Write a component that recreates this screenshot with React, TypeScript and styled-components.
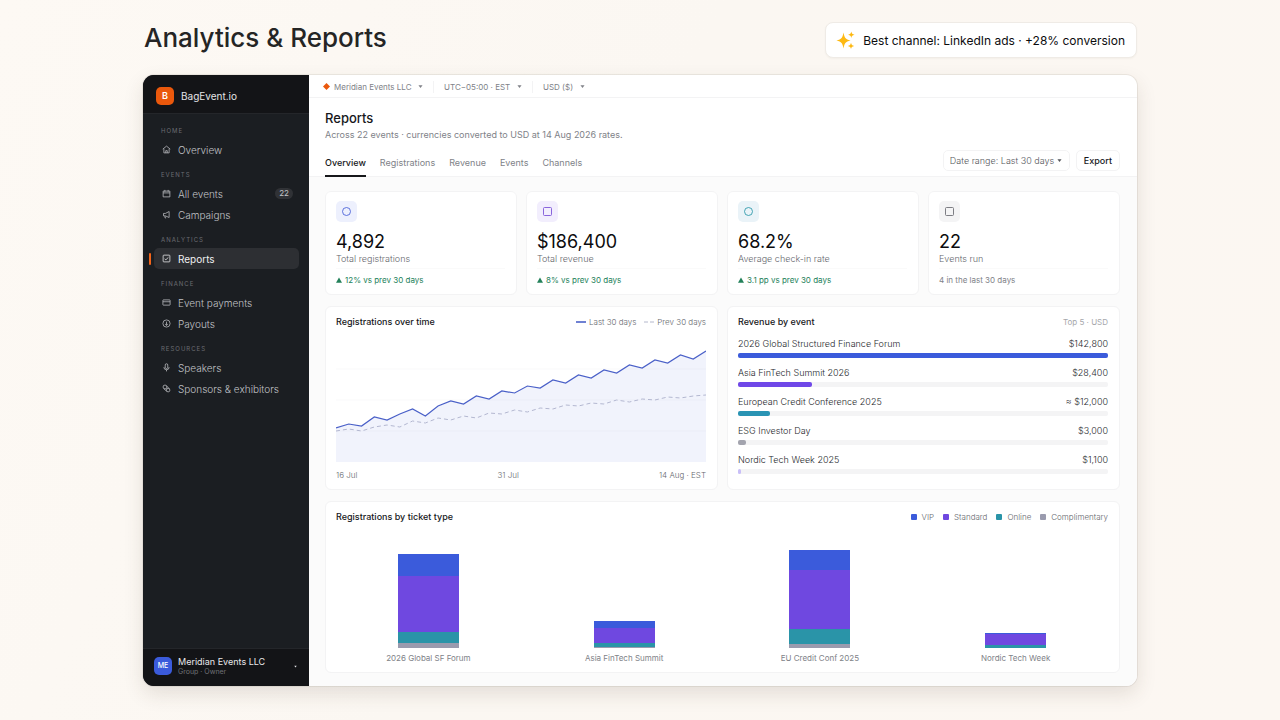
import React from "react";
import styled, { createGlobalStyle } from "styled-components";

const color = {
  ink: "#17181b",
  soft: "#3c3e44",
  muted: "#808288",
  faint: "#a6a7ab",
  line: "#f3f3f4",
  blue: "#3b5bdb",
  violet: "#6f48e0",
  teal: "#2a94a8",
  grey: "#9a9bae",
  green: "#23815a",
  orange: "#ea580c",
};

const GlobalStyle = createGlobalStyle`
  *, *::before, *::after { box-sizing: border-box; }
  body {
    margin: 0;
    background: linear-gradient(115deg, #fdf9f4 0%, #fbf7f2 45%, #fcf7f2 100%);
    font-family: Inter, "Liberation Sans", sans-serif;
    font-size: 8px;
    line-height: 12px;
    color: ${color.ink};
  }
  h1, h2, h3, p, ul { margin: 0; padding: 0; }
  ul { list-style: none; }
  button, select { font: inherit; color: inherit; margin: 0; }
  a { color: inherit; text-decoration: none; }
`;

const Page = styled.div`
  min-height: 100vh;
  padding: 22px 143px 34px;
  display: flex;
  flex-direction: column;
  gap: 17px;
`;

const Masthead = styled.header`
  display: flex;
  justify-content: space-between;
  align-items: center;
  height: 36px;
`;

const PageTitle = styled.h1`
  font-size: 26px;
  line-height: 32px;
  font-weight: 500;
  color: #252525;
  padding: 0 0 4px 1px;
`;

const Callout = styled.p`
  display: flex;
  align-items: center;
  gap: 8px;
  height: 36px;
  padding: 1px 11px 0 10px;
  font-size: 12px;
  line-height: 18px;
  color: #0c0c0e;
  background: #fff;
  border: 1px solid #efebe6;
  border-radius: 8px;
  box-shadow: 0 1px 2px rgba(60, 40, 20, 0.04);
  white-space: nowrap;
`;

const AppWindow = styled.div`
  flex: 1;
  display: flex;
  background: #fff;
  border-radius: 11px;
  overflow: hidden;
  box-shadow: 0 0 0 1px rgba(60, 50, 40, 0.08), 0 8px 20px rgba(70, 55, 40, 0.13);
`;

const Sidebar = styled.aside`
  flex: none;
  width: 166px;
  display: flex;
  flex-direction: column;
  background: #1b1e22;
  color: #b9bbbf;
`;

const Brand = styled.div`
  display: flex;
  align-items: center;
  gap: 7px;
  height: 39px;
  padding: 3px 13px 0;
  background: #131417;
  border-bottom: 1px solid #24262a;
  font-size: 10px;
  color: #e4e4e6;
`;

const BrandMark = styled.span`
  display: grid;
  place-items: center;
  width: 18px;
  height: 18px;
  border-radius: 5px;
  background: ${color.orange};
  color: #fff;
  font-size: 9px;
  font-weight: 600;
`;

const SideNav = styled.nav`
  flex: 1;
  padding: 2px 10px 0 6px;
`;

const SectionLabel = styled.h2`
  padding: 10px 0 4px 12px;
  font-size: 6px;
  line-height: 9px;
  font-weight: 400;
  letter-spacing: 1px;
  color: #6b6d72;
`;

const NavRow = styled.li`
  display: flex;
  align-items: center;
  gap: 3px;
`;

const Marker = styled.span<{ $on?: boolean }>`
  width: 2px;
  height: 12px;
  border-radius: 1px;
  background: ${(p) => (p.$on ? "#f4651a" : "transparent")};
`;

const NavLink = styled.a<{ $active?: boolean }>`
  flex: 1;
  display: flex;
  align-items: center;
  gap: 7px;
  height: 21px;
  padding: 0 6px 0 8px;
  border-radius: 5px;
  font-size: 10px;
  font-weight: ${(p) => (p.$active ? 400 : 300)};
  background: ${(p) => (p.$active ? "#2d2f33" : "transparent")};
  color: ${(p) => (p.$active ? "#f0f0f1" : "#c0c2c6")};
  svg { flex: none; width: 9px; height: 9px; }
`;

const Count = styled.span`
  margin-left: auto;
  padding: 0 4px;
  border-radius: 6px;
  background: #303236;
  font-size: 8px;
  line-height: 11px;
  font-weight: 400;
  color: #c4c5c8;
`;

const Account = styled.button`
  display: flex;
  align-items: center;
  gap: 6px;
  height: 38px;
  padding: 0 12px 3px 11px;
  border: 0;
  border-top: 1px solid #24262a;
  background: #131417;
  text-align: left;
  color: #e8e8ea;
`;

const Avatar = styled.span`
  display: grid;
  place-items: center;
  width: 18px;
  height: 18px;
  border-radius: 5px;
  background: ${color.blue};
  font-size: 7px;
  font-weight: 500;
  color: #fff;
`;

const AccountText = styled.span`
  flex: 1;
  display: flex;
  flex-direction: column;
  font-size: 9px;
  line-height: 11px;
`;

const AccountRole = styled.small`
  font-size: 7px;
  line-height: 9px;
  color: #6f7176;
`;

const Main = styled.main`
  flex: 1;
  min-width: 0;
  display: flex;
  flex-direction: column;
`;

const TopBar = styled.div`
  display: flex;
  align-items: center;
  height: 23px;
  padding: 1px 14px 0;
  border-bottom: 1px solid ${color.line};
`;

const Picker = styled.div`
  display: flex;
  align-items: center;
  gap: 4px;
  color: ${color.muted};
  & + & {
    margin-left: 10px;
    padding-left: 10px;
    border-left: 1px solid ${color.line};
  }
`;

const PlainSelect = styled.select`
  appearance: none;
  border: 0;
  padding: 0 2px 0 0;
  background: transparent;
  line-height: 12px;
`;

const PageHead = styled.header`
  padding: 12px 17px 0 16px;
  border-bottom: 1px solid ${color.line};
`;

const Heading = styled.h2`
  font-size: 13px;
  line-height: 17px;
  font-weight: 500;
`;

const Subheading = styled.p`
  font-size: 9px;
  line-height: 14px;
  color: ${color.muted};
  padding-top: 1px;
`;

const HeadRow = styled.div`
  display: flex;
  justify-content: space-between;
  margin-top: 8px;
`;

const Tabs = styled.div`
  display: flex;
  gap: 14px;
`;

const Tab = styled.button<{ $active?: boolean }>`
  height: 27px;
  margin-bottom: -1px;
  padding: 0;
  border: 0;
  border-bottom: 2px solid ${(p) => (p.$active ? color.ink : "transparent")};
  background: transparent;
  font-size: 9px;
  font-weight: ${(p) => (p.$active ? 500 : 400)};
  color: ${(p) => (p.$active ? color.ink : color.muted)};
`;

const Actions = styled.div`
  display: flex;
  gap: 6px;
`;

const RangePicker = styled.div`
  display: flex;
  align-items: center;
  height: 21px;
  padding: 0 7px 0 6px;
  border: 1px solid ${color.line};
  border-radius: 5px;
  font-size: 9px;
  font-weight: 300;
  color: #55575c;
`;

const ExportButton = styled.button`
  height: 21px;
  padding: 0 7px;
  border: 1px solid ${color.line};
  border-radius: 5px;
  background: #fff;
  font-size: 9px;
  font-weight: 500;
`;

const Board = styled.div`
  flex: 1;
  display: grid;
  grid-template-rows: 104px 184px 1fr;
  gap: 11px;
  padding: 14px 17px 13px 16px;
  background: #fbfbfb;
`;

const Row = styled.div<{ $columns: number }>`
  display: grid;
  grid-template-columns: repeat(${(p) => p.$columns}, minmax(0, 1fr));
  gap: 9px;
`;

const Card = styled.section`
  display: flex;
  flex-direction: column;
  padding: 9px 11px 8px 10px;
  background: #fff;
  border: 1px solid ${color.line};
  border-radius: 6px;
`;

const StatIcon = styled.span<{ $tint: string; $ink: string }>`
  display: grid;
  place-items: center;
  width: 21px;
  height: 21px;
  border-radius: 5px;
  background: ${(p) => p.$tint};
  color: ${(p) => p.$ink};
`;

const StatValue = styled.p`
  padding-top: 9px;
  font-size: 18px;
  line-height: 22px;
  font-weight: 400;
  color: #0c0c0e;
`;

const StatLabel = styled.h3`
  font-size: 9px;
  line-height: 12px;
  font-weight: 300;
  color: #65676d;
  padding-bottom: 3px;
`;

const StatNote = styled.p<{ $up?: boolean }>`
  display: flex;
  align-items: center;
  gap: 3px;
  padding-top: 5px;
  border-top: 1px solid #fafafa;
  color: ${(p) => (p.$up ? color.green : color.muted)};
`;

const CardHead = styled.header`
  display: flex;
  justify-content: space-between;
  align-items: center;
  height: 12px;
`;

const CardTitle = styled.h3`
  font-size: 9px;
  line-height: 12px;
  font-weight: 500;
`;

const CardMeta = styled.span`
  font-size: 8px;
  color: ${color.faint};
`;

const Legend = styled.ul<{ $roomy?: boolean }>`
  display: flex;
  gap: ${(p) => (p.$roomy ? 9 : 8)}px;
  font-weight: 300;
  color: #65676d;
  li { gap: ${(p) => (p.$roomy ? 5 : 3)}px; }
`;

const LegendItem = styled.li`
  display: flex;
  align-items: center;
`;

const Swatch = styled.span<{ $fill: string }>`
  width: 6px;
  height: 6px;
  border-radius: 1px;
  background: ${(p) => p.$fill};
`;

const Plot = styled.svg`
  display: block;
  width: 100%;
  height: 115px;
  margin-top: 19px;
`;

const Axis = styled.div`
  display: flex;
  justify-content: space-between;
  padding-top: 7px;
  font-weight: 300;
  color: #65676d;
`;

const RevenueList = styled.ul`
  display: flex;
  flex-direction: column;
  gap: 9px;
  padding-top: 10px;
`;

const RevenueLine = styled.div`
  display: flex;
  justify-content: space-between;
  padding-bottom: 3px;
  font-size: 9px;
  font-weight: 300;
  color: #26282c;
`;

const Track = styled.div`
  height: 5px;
  border-radius: 2px;
  background: #f4f4f5;
`;

const Fill = styled.div<{ $fill: string }>`
  height: 5px;
  border-radius: 2px;
  background: ${(p) => p.$fill};
`;

const Columns = styled.ul`
  flex: 1;
  display: grid;
  grid-template-columns: repeat(4, minmax(0, 1fr));
  gap: 11px;
`;

const Column = styled.li`
  display: flex;
  flex-direction: column;
  justify-content: flex-end;
  align-items: center;
  color: ${color.muted};
`;

const Stack = styled.div`
  width: 33%;
  margin-bottom: 4px;
`;

const Segment = styled.div<{ $fill: string }>`
  background: ${(p) => p.$fill};
`;

const icons: Record<string, React.ReactNode> = {
  home: <path d="M1 5.500 6 1.500l5 4M2.500 5v5.500h7V5M5 10.500V7.500h2v3" />,
  calendar: <path d="M1.500 2.800h9v7.700h-9zM1.500 5.200h9M3.800 1.200v2.400M8.200 1.200v2.400" />,
  horn: <path d="M9.500 2v8L4.500 7.800H2V4.600h2.500zM4 8v2.500h1.500" />,
  report: <path d="M2.500 1.500h7a1 1 0 0 1 1 1v7a1 1 0 0 1-1 1h-7a1 1 0 0 1-1-1v-7a1 1 0 0 1 1-1zM3.500 6.500l1.700 1.200L8.500 4.500" />,
  card: <path d="M1.800 2.500h8.400a.6.6 0 0 1 .6.6v5.800a.6.6 0 0 1-.6.6H1.800a.6.6 0 0 1-.6-.6V3.100a.6.6 0 0 1 .6-.6zM1.200 5h9.600" />,
  payout: <path d="M6 1.200a4.800 4.800 0 1 0 0 9.600 4.800 4.800 0 0 0 0-9.600zM6 3.500v5M4.200 6.800 6 8.500l1.800-1.700" />,
  mic: <path d="M6 1a1.700 1.700 0 0 1 1.700 1.700v3a1.700 1.700 0 0 1-3.400 0v-3A1.700 1.700 0 0 1 6 1zM2.500 5.500a3.500 3.500 0 0 0 7 0M6 9v2.200" />,
  link: (
    <>
      <circle cx="4" cy="4" r="2.600" />
      <circle cx="8.200" cy="8.200" r="2.300" />
      <path d="M6.300 2.800 9.800 6.300M2.500 6.200l3.700 3.600" />
    </>
  ),
};

const Icon = ({ name }: { name: string }) => (
  <svg viewBox="0 0 12 12" fill="none" stroke="currentColor" strokeWidth="1" strokeLinejoin="round" aria-hidden>
    {icons[name]}
  </svg>
);

const Caret = ({ size = 5 }: { size?: number }) => (
  <svg width={size} height={size} viewBox="0 0 6 6" fill="currentColor" aria-hidden>
    <path d="M0.500 1.500h5L3 4.800z" />
  </svg>
);

const Sparkles = () => (
  <svg width="19" height="19" viewBox="0 0 19 19" fill="#fdb913" aria-hidden>
    <path d="M7.500 1.500C8.500 7 9.300 8 14.500 9.500 9.300 11 8.500 12 7.500 17.500 6.500 12 5.700 11 .5 9.500 5.700 8 6.500 7 7.500 1.500z" />
    <path d="M15.300.5c.5 2.200 1 2.700 3.200 3.200-2.200.5-2.700 1-3.200 3.200-.5-2.200-1-2.700-3.200-3.200 2.200-.5 2.700-1 3.200-3.200z" />
    <path d="M15 11.700c.5 2.200 1 2.700 3.200 3.200-2.200.5-2.700 1-3.200 3.200-.5-2.200-1-2.700-3.200-3.200 2.200-.5 2.700-1 3.200-3.200z" />
  </svg>
);

type NavSection = {
  label: string;
  items: { icon: string; text: string; count?: number; active?: boolean }[];
};

const navigation: NavSection[] = [
  { label: "HOME", items: [{ icon: "home", text: "Overview" }] },
  { label: "EVENTS", items: [{ icon: "calendar", text: "All events", count: 22 }, { icon: "horn", text: "Campaigns" }] },
  { label: "ANALYTICS", items: [{ icon: "report", text: "Reports", active: true }] },
  { label: "FINANCE", items: [{ icon: "card", text: "Event payments" }, { icon: "payout", text: "Payouts" }] },
  { label: "RESOURCES", items: [{ icon: "mic", text: "Speakers" }, { icon: "link", text: "Sponsors & exhibitors" }] },
];

const stats = [
  { value: "4,892", label: "Total registrations", note: "12% vs prev 30 days", up: true, round: true, tint: "#edf0fd", ink: "#4c63d8" },
  { value: "$186,400", label: "Total revenue", note: "8% vs prev 30 days", up: true, round: false, tint: "#f2eefd", ink: "#7d55d8" },
  { value: "68.2%", label: "Average check-in rate", note: "3.1 pp vs prev 30 days", up: true, round: true, tint: "#eaf3f8", ink: "#2f9bab" },
  { value: "22", label: "Events run", note: "4 in the last 30 days", up: false, round: false, tint: "#f4f4f5", ink: "#6f7177" },
];

const current = [81, 77, 79, 70, 73, 67, 62, 69, 59, 54, 57, 49, 52, 44, 46, 39, 41, 33, 36, 28, 31, 23, 26, 18, 21, 13, 16, 8, 12, 4];
const previous = [84, 82, 84, 80, 78, 80, 74, 76, 71, 73, 69, 71, 66, 67, 63, 65, 61, 62, 58, 59, 56, 57, 53, 55, 52, 53, 50, 51, 49, 48];
const PLOT_WIDTH = 371;
const toPoints = (values: number[]) =>
  values.map((v, i) => `${((i * PLOT_WIDTH) / (values.length - 1)).toFixed(1)},${v}`).join(" ");

const revenue = [
  { name: "2026 Global Structured Finance Forum", amount: "$142,800", share: 100, fill: color.blue },
  { name: "Asia FinTech Summit 2026", amount: "$28,400", share: 20, fill: "#7048e8" },
  { name: "European Credit Conference 2025", amount: "≈ $12,000", share: 8.6, fill: "#2a94b4" },
  { name: "ESG Investor Day", amount: "$3,000", share: 2.1, fill: "#a3a4ae" },
  { name: "Nordic Tech Week 2025", amount: "$1,100", share: 0.8, fill: "#c9bff8" },
];

const tickets = [
  { name: "VIP", fill: color.blue },
  { name: "Standard", fill: color.violet },
  { name: "Online", fill: color.teal },
  { name: "Complimentary", fill: color.grey },
];

const ticketBars = [
  { name: "2026 Global SF Forum", parts: [22, 56, 11, 5] },
  { name: "Asia FinTech Summit", parts: [7, 15, 4, 1] },
  { name: "EU Credit Conf 2025", parts: [20, 59, 15, 4] },
  { name: "Nordic Tech Week", parts: [1, 11, 3, 0] },
];

export default function App() {
  return (
    <>
      <GlobalStyle />
      <Page>
        <Masthead>
          <PageTitle>Analytics &amp; Reports</PageTitle>
          <Callout>
            <Sparkles />
            Best channel: LinkedIn ads · +28% conversion
          </Callout>
        </Masthead>
        <AppWindow>
          <Sidebar>
            <Brand>
              <BrandMark>B</BrandMark>
              BagEvent.io
            </Brand>
            <SideNav aria-label="Main">
              {navigation.map((section) => (
                <section key={section.label}>
                  <SectionLabel>{section.label}</SectionLabel>
                  <ul>
                    {section.items.map((item) => (
                      <NavRow key={item.text}>
                        <Marker $on={item.active} />
                        <NavLink href="#" $active={item.active}>
                          <Icon name={item.icon} />
                          {item.text}
                          {item.count && <Count>{item.count}</Count>}
                        </NavLink>
                      </NavRow>
                    ))}
                  </ul>
                </section>
              ))}
            </SideNav>
            <Account type="button">
              <Avatar>ME</Avatar>
              <AccountText>
                Meridian Events LLC
                <AccountRole>Group · Owner</AccountRole>
              </AccountText>
              <Caret size={3} />
            </Account>
          </Sidebar>
          <Main>
            <TopBar>
              <Picker>
                <svg width="7" height="7" viewBox="0 0 8 8" fill={color.orange} aria-hidden>
                  <path d="M4 0l4 4-4 4-4-4z" />
                </svg>
                <PlainSelect aria-label="Organisation">
                  <option>Meridian Events LLC</option>
                </PlainSelect>
                <Caret />
              </Picker>
              <Picker>
                <PlainSelect aria-label="Time zone">
                  <option>UTC−05:00 · EST</option>
                </PlainSelect>
                <Caret />
              </Picker>
              <Picker>
                <PlainSelect aria-label="Currency">
                  <option>USD ($)</option>
                </PlainSelect>
                <Caret />
              </Picker>
            </TopBar>
            <PageHead>
              <Heading>Reports</Heading>
              <Subheading>Across 22 events · currencies converted to USD at 14 Aug 2026 rates.</Subheading>
              <HeadRow>
                <Tabs role="tablist">
                  {["Overview", "Registrations", "Revenue", "Events", "Channels"].map((name, i) => (
                    <Tab key={name} type="button" role="tab" aria-selected={i === 0} $active={i === 0}>
                      {name}
                    </Tab>
                  ))}
                </Tabs>
                <Actions>
                  <RangePicker>
                    <PlainSelect aria-label="Date range">
                      <option>Date range: Last 30 days</option>
                    </PlainSelect>
                    <Caret />
                  </RangePicker>
                  <ExportButton type="button">Export</ExportButton>
                </Actions>
              </HeadRow>
            </PageHead>
            <Board>
              <Row $columns={4}>
                {stats.map((stat) => (
                  <Card key={stat.label}>
                    <StatIcon $tint={stat.tint} $ink={stat.ink}>
                      <svg width="9" height="9" viewBox="0 0 9 9" fill="none" stroke="currentColor" strokeWidth="0.9" aria-hidden>
                        {stat.round ? <circle cx="4.500" cy="4.500" r="4" /> : <rect x="0.500" y="0.500" width="8" height="8" rx="1" />}
                      </svg>
                    </StatIcon>
                    <StatValue>{stat.value}</StatValue>
                    <StatLabel>{stat.label}</StatLabel>
                    <StatNote $up={stat.up}>
                      {stat.up && (
                        <svg width="6" height="6" viewBox="0 0 6 6" fill="currentColor" aria-hidden>
                          <path d="M3 0.500 6 5.800H0z" />
                        </svg>
                      )}
                      {stat.note}
                    </StatNote>
                  </Card>
                ))}
              </Row>
              <Row $columns={2}>
                <Card>
                  <CardHead>
                    <CardTitle>Registrations over time</CardTitle>
                    <Legend>
                      <LegendItem>
                        <svg width="10" height="2" viewBox="0 0 10 2" aria-hidden>
                          <path d="M0 1h10" stroke="#3f57c4" strokeWidth="1.500" />
                        </svg>
                        Last 30 days
                      </LegendItem>
                      <LegendItem>
                        <svg width="10" height="2" viewBox="0 0 10 2" aria-hidden>
                          <path d="M0 1h10" stroke="#b4b8cc" strokeWidth="1" strokeDasharray="4 2" />
                        </svg>
                        Prev 30 days
                      </LegendItem>
                    </Legend>
                  </CardHead>
                  <Plot viewBox={`0 0 ${PLOT_WIDTH} 115`} preserveAspectRatio="none" role="img" aria-label="Registrations over time">
                    <path d="M0 22h371M0 53h371M0 84h371" stroke="#f9f9fa" />
                    <polygon points={`0,115 ${toPoints(current)} ${PLOT_WIDTH},115`} fill="#3b5bdb" fillOpacity="0.07" />
                    <polyline points={toPoints(previous)} fill="none" stroke="#b3b7d0" strokeDasharray="4 3" />
                    <polyline points={toPoints(current)} fill="none" stroke="#4a60c8" strokeWidth="1.200" />
                  </Plot>
                  <Axis>
                    <span>16 Jul</span>
                    <span>31 Jul</span>
                    <span>14 Aug · EST</span>
                  </Axis>
                </Card>
                <Card>
                  <CardHead>
                    <CardTitle>Revenue by event</CardTitle>
                    <CardMeta>Top 5 · USD</CardMeta>
                  </CardHead>
                  <RevenueList>
                    {revenue.map((row) => (
                      <li key={row.name}>
                        <RevenueLine>
                          <span>{row.name}</span>
                          <span>{row.amount}</span>
                        </RevenueLine>
                        <Track>
                          <Fill $fill={row.fill} style={{ width: `${row.share}%` }} />
                        </Track>
                      </li>
                    ))}
                  </RevenueList>
                </Card>
              </Row>
              <Card>
                <CardHead>
                  <CardTitle>Registrations by ticket type</CardTitle>
                  <Legend $roomy>
                    {tickets.map((ticket) => (
                      <LegendItem key={ticket.name}>
                        <Swatch $fill={ticket.fill} />
                        {ticket.name}
                      </LegendItem>
                    ))}
                  </Legend>
                </CardHead>
                <Columns>
                  {ticketBars.map((bar) => (
                    <Column key={bar.name}>
                      <Stack>
                        {bar.parts.map((height, i) => (
                          <Segment key={tickets[i].name} $fill={tickets[i].fill} style={{ height }} />
                        ))}
                      </Stack>
                      {bar.name}
                    </Column>
                  ))}
                </Columns>
              </Card>
            </Board>
          </Main>
        </AppWindow>
      </Page>
    </>
  );
}
